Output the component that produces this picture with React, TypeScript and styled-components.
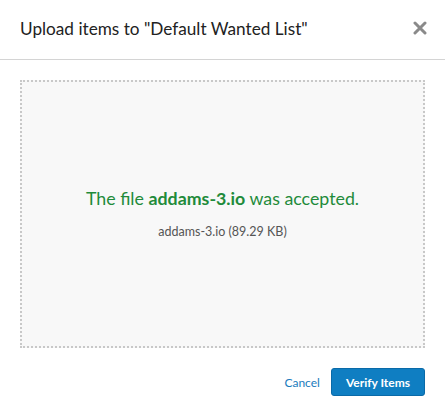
import React from "react";
import styled, { createGlobalStyle } from "styled-components";

const Global = createGlobalStyle`
  html, body { margin: 0; padding: 0; background: #fff; }
  body { font-family: "Lato", "Open Sans", "Liberation Sans", sans-serif; }
  * { box-sizing: border-box; }
`;

const Modal = styled.div`
  width: 445px;
  height: 413px;
  background: #fff;
  display: flex;
  flex-direction: column;
`;

const Header = styled.div`
  height: 60px;
  border-bottom: 1px solid #d4d4d4;
  display: flex;
  align-items: center;
  justify-content: space-between;
  padding: 0 17px 3px 20px;
`;

const Title = styled.h1`
  margin: 0;
  font-size: 17.2px;
  font-weight: 400;
  color: #222;
`;

const Close = styled.button`
  border: 0;
  background: none;
  padding: 0;
  width: 16px;
  height: 16px;
  display: flex;
  align-items: center;
  justify-content: center;
  cursor: pointer;
`;

const Body = styled.div`
  padding: 20px 20px 0 20px;
`;

const DropZone = styled.div`
  height: 268px;
  border: 2px dotted #c8c8c8;
  background: #f8f8f8;
  display: flex;
  flex-direction: column;
  align-items: center;
  justify-content: center;
  padding-bottom: 2px;
`;

const Accepted = styled.p`
  margin: 0;
  font-size: 17.8px;
  color: #1f8b3b;
  font-weight: 400;
  b { font-weight: 700; }
`;

const FileInfo = styled.p`
  margin: 15px 0 0 0;
  font-size: 12.5px;
  color: #555;
`;

const Footer = styled.div`
  display: flex;
  justify-content: flex-end;
  align-items: center;
  gap: 11px;
  padding: 20px 20px 0 20px;
`;

const LinkButton = styled.button`
  border: 0;
  background: none;
  font-family: inherit;
  font-size: 12px;
  color: #1a7bbd;
  padding: 0;
  cursor: pointer;
`;

const PrimaryButton = styled.button`
  height: 28px;
  padding: 0 14px;
  border: 1px solid #0a6aa8;
  border-radius: 3px;
  background: #0f7ec2;
  color: #fff;
  font-family: inherit;
  font-weight: 700;
  font-size: 12px;
  cursor: pointer;
`;

export default function App() {
  return (
    <>
      <Global />
      <Modal>
        <Header>
          <Title>Upload items to "Default Wanted List"</Title>
          <Close aria-label="Close">
            <svg width="14" height="14" viewBox="0 0 14 14">
              <path d="M2 2 L12 12 M12 2 L2 12" stroke="#8a8a8a" strokeWidth="3" strokeLinecap="round" />
            </svg>
          </Close>
        </Header>
        <Body>
          <DropZone>
            <Accepted>
              The file <b>addams-3.io</b> was accepted.
            </Accepted>
            <FileInfo>addams-3.io (89.29 KB)</FileInfo>
          </DropZone>
        </Body>
        <Footer>
          <LinkButton>Cancel</LinkButton>
          <PrimaryButton>Verify Items</PrimaryButton>
        </Footer>
      </Modal>
    </>
  );
}
